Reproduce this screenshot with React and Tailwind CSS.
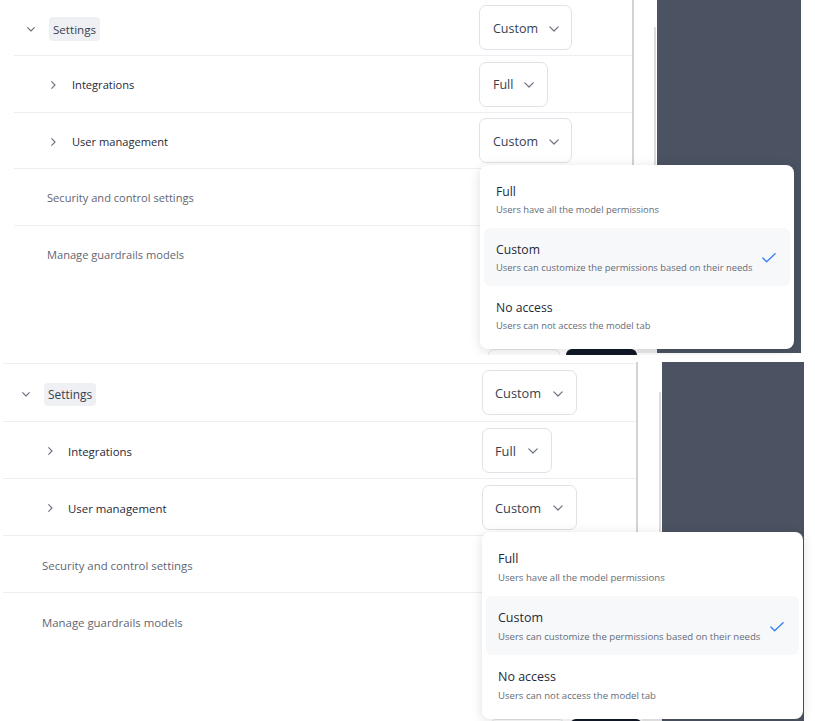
import React from "react";

const ChevronDown = ({ className }) => (
  <svg className={className} width="8" height="5" viewBox="0 0 8 5" fill="none">
    <path d="M0.7 0.7 L4 4 L7.3 0.7" stroke="currentColor" strokeWidth="1.1" strokeLinecap="round" strokeLinejoin="round" />
  </svg>
);

const ChevronRight = ({ className }) => (
  <svg className={className} width="5" height="8" viewBox="0 0 5 8" fill="none">
    <path d="M0.7 0.7 L4 4 L0.7 7.3" stroke="currentColor" strokeWidth="1.1" strokeLinecap="round" strokeLinejoin="round" />
  </svg>
);

const BtnChevron = () => (
  <svg className="text-[#6b7280] shrink-0 mt-[2px]" width="10" height="6" viewBox="0 0 10 6" fill="none">
    <path d="M0.8 0.8 L5 5 L9.2 0.8" stroke="currentColor" strokeWidth="1.2" strokeLinecap="round" strokeLinejoin="round" />
  </svg>
);

const Check = () => (
  <svg width="14" height="10" viewBox="0 0 14 10" fill="none">
    <path d="M0.9 5 L4.6 8.8 L13.1 0.8" stroke="#3b82f6" strokeWidth="1.4" strokeLinecap="round" strokeLinejoin="round" />
  </svg>
);

const TOP = {
  panel: "relative flex h-[355px] overflow-hidden bg-white",
  leftMargin: "w-[14px] shrink-0",
  content: "w-[618px] shrink-0 flex flex-col",
  topLine: "hidden",
  rowH: ["h-[56px]", "h-[57px]", "h-[56px]", "h-[57px]", "h-[56px]"],
  leftW: "w-[465px] shrink-0 pt-[3px]",
  row1Pad: "pl-[13px] gap-[14px]",
  badge: "h-[24px] px-[4px] rounded-[4px] text-[11.6px]",
  subPad: "pl-[37px] gap-[16px]",
  subText: "text-[11.1px]",
  plainPad: "pl-[33px]",
  plainText: "text-[11.1px]",
  btn: "h-[45px] pl-[13px] gap-[11px] text-[12.5px]",
  btnCustomW: "w-[93px]",
  btnFullW: "w-[69px]",
  line1: "w-[2px] h-[349px] bg-[#d3d3d3] shrink-0",
  gap: "w-[20px] shrink-0",
  line2: "w-[2px] mt-[27px] h-[326px] bg-[#dcdcdc] shrink-0",
  dark: "w-[144px] h-[353px] bg-[#4b5362] shrink-0",
  menu: "absolute left-[480px] top-[165px] w-[314px] h-[184px] py-[5px] px-[4px]",
  optH: "h-[58px]",
  optPad: "pl-[12px] pr-[14px]",
  optTitle: "text-[12.2px] leading-[16px] pt-[2px]",
  optSub: "text-[9.4px] leading-[14px] mt-[3px]",
  footer: "absolute left-[488px] top-[349px] flex",
  cancel: "w-[72px] h-[36px]",
  save: "ml-[6px] w-[71px] h-[36px]",
  strip: "w-[20px] h-[4px]",
};

const BOTTOM = {
  panel: "relative flex h-[359px] overflow-hidden bg-white",
  leftMargin: "w-[3px] shrink-0",
  content: "w-[633px] shrink-0 flex flex-col",
  topLine: "h-[2px] border-b border-[#eceef1] shrink-0",
  rowH: ["h-[58px]", "h-[57px]", "h-[57px]", "h-[57px]", "h-[57px]"],
  leftW: "w-[479px] shrink-0 pt-[3px]",
  row1Pad: "pl-[19px] gap-[14px]",
  badge: "h-[23px] px-[4px] rounded-[4px] text-[11.9px]",
  subPad: "pl-[45px] gap-[15px]",
  subText: "text-[11.4px]",
  plainPad: "pl-[39px]",
  plainText: "text-[11.4px]",
  btn: "h-[45px] pl-[12px] gap-[12px] text-[12.8px]",
  btnCustomW: "w-[95px]",
  btnFullW: "w-[70px]",
  line1: "w-[2px] h-[359px] bg-[#d3d3d3] shrink-0",
  gap: "w-[21px] shrink-0",
  line2: "w-[2px] mt-[30px] h-[329px] bg-[#dcdcdc] shrink-0",
  dark: "w-[142px] h-[359px] bg-[#4b5362] shrink-0",
  menu: "absolute left-[482px] top-[170px] w-[321px] h-[187px] py-[5px] px-[4px]",
  optH: "h-[59px]",
  optPad: "pl-[12px] pr-[15px]",
  optTitle: "text-[12.5px] leading-[16px] pt-[2px]",
  optSub: "text-[9.6px] leading-[14px] mt-[4px]",
  footer: "absolute left-[490px] top-[357px] flex",
  cancel: "w-[75px] h-[36px]",
  save: "ml-[5px] w-[72px] h-[36px]",
  strip: "w-[20px] h-[4px]",
};

function SelectButton({ c, label, full }) {
  return (
    <div
      className={`flex items-center rounded-[7px] border border-[#dfe2e6] bg-white text-[#374151] ${c.btn} ${
        full ? c.btnFullW : c.btnCustomW
      }`}
    >
      <span className="pt-[3px]">{label}</span>
      <BtnChevron />
    </div>
  );
}

function Row({ c, h, left, button, last }) {
  return (
    <div className={`flex items-center shrink-0 ${h} ${last ? "" : "border-b border-[#eceef1]"}`}>
      <div className={`flex items-center ${c.leftW}`}>{left}</div>
      <div className="flex-1 flex items-center">{button}</div>
    </div>
  );
}

const OPTIONS = [
  { title: "Full", sub: "Users have all the model permissions" },
  { title: "Custom", sub: "Users can customize the permissions based on their needs", selected: true },
  { title: "No access", sub: "Users can not access the model tab" },
];

function Menu({ c }) {
  return (
    <div className={`${c.menu} bg-white rounded-[8px] shadow-[0_2px_12px_rgba(0,0,0,0.13)] flex flex-col`}>
      {OPTIONS.map((o) => (
        <div
          key={o.title}
          className={`flex items-center justify-between rounded-[6px] ${c.optH} ${c.optPad} ${
            o.selected ? "bg-[#f7f8fa]" : ""
          }`}
        >
          <div className="flex flex-col">
            <span className={`text-[#1f2937] ${c.optTitle}`}>{o.title}</span>
            <span className={`text-[#656c79] ${c.optSub}`}>{o.sub}</span>
          </div>
          {o.selected && (
            <div className="pt-[2px]">
              <Check />
            </div>
          )}
        </div>
      ))}
    </div>
  );
}

function Panel({ c }) {
  return (
    <div className={c.panel}>
      <div className={c.leftMargin} />
      <div className={c.content}>
        <div className={c.topLine} />
        <Row
          c={c}
          h={c.rowH[0]}
          left={
            <div className={`flex items-center ${c.row1Pad}`}>
              <ChevronDown className="text-[#6b7280]" />
              <span className={`flex items-center pt-[2px] bg-[#eff0f3] text-[#374151] ${c.badge}`}>Settings</span>
            </div>
          }
          button={<SelectButton c={c} label="Custom" />}
        />
        <Row
          c={c}
          h={c.rowH[1]}
          left={
            <div className={`flex items-center ${c.subPad}`}>
              <ChevronRight className="text-[#6b7280]" />
              <span className={`font-medium text-[#1f2937] ${c.subText}`}>Integrations</span>
            </div>
          }
          button={<SelectButton c={c} label="Full" full />}
        />
        <Row
          c={c}
          h={c.rowH[2]}
          left={
            <div className={`flex items-center ${c.subPad}`}>
              <ChevronRight className="text-[#6b7280]" />
              <span className={`font-medium text-[#1f2937] ${c.subText}`}>User management</span>
            </div>
          }
          button={<SelectButton c={c} label="Custom" />}
        />
        <Row
          c={c}
          h={c.rowH[3]}
          left={<span className={`text-[#5f6673] ${c.plainPad} ${c.plainText}`}>Security and control settings</span>}
        />
        <Row
          c={c}
          h={c.rowH[4]}
          last
          left={<span className={`text-[#5f6673] ${c.plainPad} ${c.plainText}`}>Manage guardrails models</span>}
        />
      </div>
      <div className={c.line1} />
      <div className={c.gap} />
      <div className={c.line2} />
      <div className="w-[1px] shrink-0" />
      <div className={c.dark} />

      <div className={c.footer}>
        <div className={`bg-white border border-[#e5e7eb] rounded-[6px] ${c.cancel}`} />
        <div className={`bg-[#111827] rounded-[6px] ${c.save}`} />
        <div className={`bg-[#ededed] ${c.strip}`} />
      </div>
      <Menu c={c} />
    </div>
  );
}

export default function App() {
  return (
    <div className="w-[815px] h-[721px] bg-white overflow-hidden font-['Open_Sans',sans-serif]">
      <Panel c={TOP} />
      <div className="h-[7px]" />
      <Panel c={BOTTOM} />
    </div>
  );
}
